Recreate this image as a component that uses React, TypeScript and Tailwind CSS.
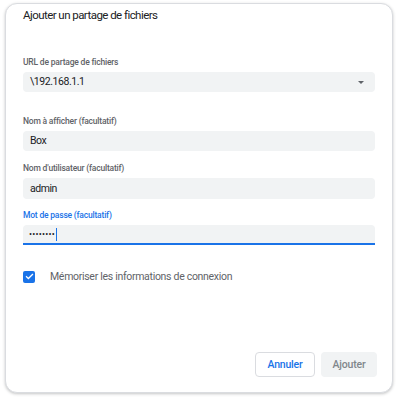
export default function App() {
  return (
    <div className="w-[398px] h-[400px] bg-white pt-[3px] pl-[5px] font-['Roboto','Liberation_Sans',sans-serif]">
      <div className="box-border w-[388px] h-[390px] rounded-[12px] border border-[#dadce0] bg-white shadow-[0_1px_3px_rgba(60,64,67,0.3)] px-[17px] flex flex-col">
        <h1 className="mt-[1px] h-[20px] leading-[20px] text-[11.5px] tracking-[-0.55px] text-[#202124]">
          Ajouter un partage de fichiers
        </h1>

        {/* URL */}
        <label className="mt-[30px] h-[14px] leading-[14px] text-[8.5px] font-medium text-[#5f6368] tracking-[-0.2px]">
          URL de partage de fichiers
        </label>
        <div className="mt-[3px] h-[20px] rounded-[4px] bg-[#f1f3f4] flex items-center justify-between pl-[7px] pr-[11px]">
          <span className="text-[10.5px] tracking-[-0.45px] text-[#202124]">\192.168.1.1</span>
          <span className="w-0 h-0 border-l-[3px] border-r-[3px] border-t-[3px] border-l-transparent border-r-transparent border-t-[#5f6368]" />
        </div>

        <label className="mt-[22px] h-[14px] leading-[14px] text-[8.5px] font-medium text-[#5f6368] tracking-[-0.2px]">
          Nom à afficher (facultatif)
        </label>
        <div className="mt-[3px] h-[20px] rounded-[4px] bg-[#f1f3f4] flex items-center pl-[7px]">
          <span className="text-[10.5px] tracking-[-0.45px] text-[#202124]">Box</span>
        </div>

        <label className="mt-[10px] h-[14px] leading-[14px] text-[8.5px] font-medium text-[#5f6368] tracking-[-0.2px]">
          Nom d'utilisateur (facultatif)
        </label>
        <div className="mt-[3px] h-[21px] rounded-[4px] bg-[#f1f3f4] flex items-center pl-[7px]">
          <span className="text-[10.5px] tracking-[-0.45px] text-[#202124]">admin</span>
        </div>

        <label className="mt-[9px] h-[14px] leading-[14px] text-[8.5px] font-medium text-[#1a73e8] tracking-[-0.2px]">
          Mot de passe (facultatif)
        </label>
        <div className="mt-[3px] h-[20px] rounded-t-[4px] bg-[#f1f3f4] border-b-2 border-[#1a73e8] flex items-center pl-[6px]">
          <span className="text-[9px] tracking-[0.2px] text-[#202124] leading-none">••••••••</span>
          <span className="ml-[1px] w-[1.5px] h-[13px] bg-[#1a73e8]" />
        </div>

        {/* remember */}
        <div className="mt-[24px] flex items-center">
          <div className="w-[12px] h-[12px] rounded-[2px] bg-[#1a73e8] flex items-center justify-center">
            <svg width="9" height="9" viewBox="0 0 24 24" fill="none" stroke="white" strokeWidth="3.5" strokeLinecap="square">
              <path d="M4 12.5l5 5L20 6.5" />
            </svg>
          </div>
          <span className="ml-[15px] text-[10.5px] tracking-[-0.3px] text-[#5f6368]">Mémoriser les informations de connexion</span>
        </div>

        <div className="mt-auto mb-[15px] -mr-[2px] flex justify-end gap-[6px]">
          <button className="w-[60px] h-[25px] rounded-[4px] border border-[#dadce0] bg-white text-[10.5px] tracking-[-0.2px] font-medium text-[#1a73e8]">
            Annuler
          </button>
          <button className="w-[56px] h-[25px] rounded-[4px] bg-[#f1f3f4] text-[10.5px] tracking-[-0.2px] font-medium text-[#80868b]">
            Ajouter
          </button>
        </div>
      </div>
    </div>
  );
}
